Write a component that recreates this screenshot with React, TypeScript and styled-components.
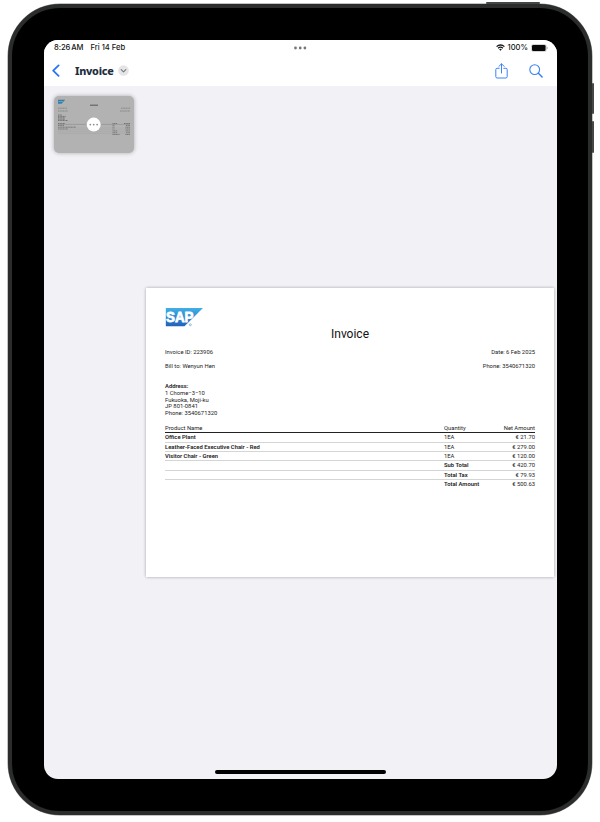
import React from "react";
import styled, { createGlobalStyle } from "styled-components";

const GlobalStyle = createGlobalStyle`
  * { box-sizing: border-box; }
  body { margin: 0; background: #fff; }
`;

const Stage = styled.main`
  width: 600px;
  height: 822px;
  padding: 4px 8px 7px;
  overflow: hidden;
`;

const Tablet = styled.div`
  position: relative;
  width: 584px;
  height: 811px;
  padding: 32px 31px 32px 32px;
  border: 4px solid #2b2c2c;
  border-radius: 52px;
  background: #000;
  box-shadow: inset 0 0 1px #111, 0 0 0 0.5px #8a8a8a;
`;

const HardwareButton = styled.i<{ $x: number; $y: number; $w: number; $h: number }>`
  position: absolute;
  left: ${(p) => p.$x}px;
  top: ${(p) => p.$y}px;
  width: ${(p) => p.$w}px;
  height: ${(p) => p.$h}px;
  border-radius: 1px;
  background: #454647;
`;

const Screen = styled.div`
  display: flex;
  flex-direction: column;
  width: 513px;
  height: 739px;
  border-radius: 14px;
  overflow: hidden;
  background: #f2f1f6;
`;

const StatusBar = styled.div`
  display: grid;
  grid-template-columns: 1fr auto 1fr;
  align-items: center;
  height: 15px;
  padding: 0 9px 0 10px;
  background: #fff;
  color: #161616;
  font: 500 7.6px/15px Inter, sans-serif;
`;

const StatusGroup = styled.div<{ $end?: boolean }>`
  display: flex;
  align-items: center;
  justify-content: ${(p) => (p.$end ? "flex-end" : "flex-start")};
  gap: ${(p) => (p.$end ? 3 : 7)}px;
  white-space: nowrap;
`;

const Clock = styled.span`
  letter-spacing: -0.1px;
  word-spacing: -0.8px;
`;

const Toolbar = styled.header`
  display: flex;
  align-items: center;
  height: 31px;
  padding: 0 14px 0 8px;
  background: #fff;
`;

const Title = styled.h1`
  margin: 0 5px 0 14px;
  color: #1d2d3e;
  font: 800 10.8px/16px "Noto Sans", sans-serif;
  letter-spacing: -0.27px;
`;

const Actions = styled.div`
  display: flex;
  align-items: center;
  gap: 21px;
  margin-left: auto;
`;

const Viewer = styled.section`
  display: flex;
  flex: 1;
  flex-direction: column;
  padding: 10px 3px 5px 10px;
`;

const Thumbnail = styled.div`
  width: 80px;
  height: 57px;
  border-radius: 5px;
  overflow: hidden;
  background: #b2b2b2;
  box-shadow: 0 0 4px rgba(0, 0, 0, 0.3);
`;

const Paper = styled.article`
  align-self: flex-end;
  width: 408px;
  height: 289px;
  margin-top: 135px;
  padding: 19px 19px 0;
  background: #fff;
  color: #1c1c1c;
  font: 400 5.85px/6.75px Roboto, sans-serif;
  box-shadow: 0 0 3px rgba(0, 0, 0, 0.32);
`;

const DocTitle = styled.h2`
  margin: 0 0 8px;
  height: 14px;
  text-align: center;
  color: #111;
  font: 400 12px/14px Roboto, sans-serif;
`;

const Meta = styled.div`
  display: flex;
  justify-content: space-between;
  height: 13.6px;
`;

const Address = styled.address`
  height: 42px;
  margin-top: 7px;
  font-style: normal;
`;

const Line = styled.div`
  height: 6.75px;
`;

const Row = styled.div<{ $head?: boolean; $last?: boolean }>`
  display: grid;
  grid-template-columns: 279px 45px 1fr;
  height: ${(p) => (p.$head ? 8 : 9.35)}px;
  line-height: ${(p) => (p.$head ? 6.8 : 8.6)}px;
  border-bottom: 1px solid ${(p) => (p.$head ? "#222" : p.$last ? "transparent" : "#d4d6d6")};
  white-space: nowrap;
`;

const Cell = styled.span<{ $bold?: boolean; $right?: boolean }>`
  font-weight: ${(p) => (p.$bold ? 600 : 400)};
  text-align: ${(p) => (p.$right ? "right" : "left")};
`;

const HomeIndicator = styled.div`
  width: 171px;
  height: 4px;
  margin: auto auto 0 161px;
  border-radius: 2px;
  background: #000;
`;

const Icon = styled.svg`
  display: block;
  flex: none;
`;

const rows = [
  { name: "Office Plant", label: "1EA", amount: "€ 21.70" },
  { name: "Leather-Faced Executive Chair - Red", label: "1EA", amount: "€ 279.00" },
  { name: "Visitor Chair - Green", label: "1EA", amount: "€ 120.00" },
  { name: "", label: "Sub Total", amount: "€ 420.70" },
  { name: "", label: "Total Tax", amount: "€ 79.93" },
  { name: "", label: "Total Amount", amount: "€ 500.63" },
];

const SapLogo = () => (
  <Icon width="38" height="20" viewBox="0 0 38 20">
    <defs>
      <linearGradient id="sap" x1="0" y1="0" x2="0" y2="1">
        <stop offset="0" stopColor="#3fb1e5" />
        <stop offset="1" stopColor="#2460bc" />
      </linearGradient>
    </defs>
    <path d="M.8 1H38L19.5 19.2H.8z" fill="url(#sap)" />
    <text x="1" y="15.4" fill="#fff" stroke="#fff" strokeWidth=".8" fontFamily="Liberation Sans, sans-serif" fontWeight="700" fontSize="15.2" textLength="27.5" lengthAdjust="spacingAndGlyphs">SAP</text>
    <circle cx="25.3" cy="17.8" r="1" fill="none" stroke="#6aa2d8" strokeWidth=".7" />
  </Icon>
);

/* Miniature of the page: each bar is [x, y, width]. */
const bars = [
  [4, 12.2, 9], [4, 15, 10], [67, 12.2, 9], [66, 15, 10],
  [4, 19, 4], [4, 20.4, 8], [4, 21.8, 7], [4, 23.2, 7], [4, 24.5, 10],
  [4, 27.5, 7], [58.5, 27.5, 4.5], [70, 27.5, 6],
  [4, 29.4, 6], [4, 31.2, 18], [4, 33, 10],
  [58.5, 29.4, 2], [58.5, 31.2, 2], [58.5, 33, 2],
  [58.5, 34.9, 5], [58.5, 36.7, 5], [58.5, 38.5, 7],
  [72, 29.4, 4], [71.5, 31.2, 4.5], [71.5, 33, 4.5], [71.5, 34.9, 4.5], [72, 36.7, 4], [71.5, 38.5, 4.5],
];

const PagePreview = () => (
  <Icon width="80" height="57" viewBox="0 0 80 57">
    <path d="M4 3.8h7.2L7.6 7.8H4z" fill="#347eae" />
    <path d="M4.4 5.6h4.8" stroke="#a0b6c3" strokeWidth=".6" />
    <path d="M36 9.2h8" stroke="#747474" strokeWidth="1.6" />
    {bars.map(([x, y, w]) => (
      <path key={`${x}-${y}`} d={`M${x} ${y}h${w}`} stroke="#606060" strokeWidth="1" strokeDasharray="1.2 .4" opacity={y < 18 ? 0.5 : 0.75} />
    ))}
    <path d="M4 28.4h72" stroke="#777" strokeWidth=".4" />
    <path d="M4 32.1h72M4 33.9h72M4 35.8h72M4 37.6h72" stroke="#9b9b9b" strokeWidth=".3" />
    <circle cx="39.7" cy="28.6" r="7" fill="#fff" />
    <g fill="#8c8c8c">
      <circle cx="36.3" cy="28.6" r=".9" />
      <circle cx="39.7" cy="28.6" r=".9" />
      <circle cx="43.1" cy="28.6" r=".9" />
    </g>
  </Icon>
);

const Invoice = () => (
  <Paper>
    <SapLogo />
    <DocTitle>Invoice</DocTitle>
    <Meta>
      <span>Invoice ID: 223906</span>
      <span>Date: 6 Feb 2025</span>
    </Meta>
    <Meta>
      <span>Bill to: Wenyun Hen</span>
      <span>Phone: 3540671320</span>
    </Meta>
    <Address>
      <Line><Cell $bold>Address:</Cell></Line>
      <Line>1 Chome−3−10</Line>
      <Line>Fukuoka, Moji-ku</Line>
      <Line>JP 801-0841</Line>
      <Line>Phone: 3540671320</Line>
    </Address>
    <Row $head>
      <Cell>Product Name</Cell>
      <Cell>Quantity</Cell>
      <Cell $right>Net Amount</Cell>
    </Row>
    {rows.map((row, i) => (
      <Row key={row.amount} $last={i === rows.length - 1}>
        <Cell $bold>{row.name}</Cell>
        <Cell $bold={!row.name}>{row.label}</Cell>
        <Cell $right>{row.amount}</Cell>
      </Row>
    ))}
  </Paper>
);

export default function App() {
  return (
    <Stage>
      <GlobalStyle />
      <Tablet>
        <HardwareButton $x={474} $y={-6} $w={54} $h={2} />
        <HardwareButton $x={580} $y={75} $w={2} $h={31} />
        <HardwareButton $x={580} $y={113} $w={2} $h={32} />
        <Screen>
          <StatusBar>
            <StatusGroup>
              <Clock>8:26 AM</Clock>
              <span>Fri 14 Feb</span>
            </StatusGroup>
            <Icon width="14" height="4" viewBox="0 0 14 4" fill="#777">
              <circle cx="1.5" cy="2" r="1.4" />
              <circle cx="6.2" cy="2" r="1.4" />
              <circle cx="10.9" cy="2" r="1.4" />
            </Icon>
            <StatusGroup $end>
              <Icon width="9" height="7" viewBox="0 0 9 7" fill="none" stroke="#161616" strokeWidth="1.3">
                <path d="M.6 2.6a5.5 5.5 0 0 1 7.8 0M2.1 4.3a3.4 3.4 0 0 1 4.8 0" />
                <path d="M3.2 5.4a1.9 1.9 0 0 1 2.6 0L4.5 6.8z" fill="#161616" stroke="none" />
              </Icon>
              <span>100%</span>
              <Icon width="17" height="8" viewBox="0 0 17 8">
                <rect x=".4" y=".5" width="15" height="7" rx="1.9" fill="none" stroke="#aaa" strokeWidth=".5" />
                <rect x="1" y="1.1" width="13.6" height="5.8" rx="1.2" fill="#080808" />
                <path d="M16.2 3v2" stroke="#999" strokeWidth=".8" />
              </Icon>
            </StatusGroup>
          </StatusBar>
          <Toolbar>
            <Icon width="9" height="13" viewBox="0 0 9 13" fill="none" stroke="#2876f3" strokeWidth="1.8" strokeLinecap="round" strokeLinejoin="round">
              <path d="M6.6 1.4 1.2 6.6l5.4 5.2" />
            </Icon>
            <Title>Invoice</Title>
            <Icon width="11" height="11" viewBox="0 0 11 11">
              <circle cx="5.5" cy="5.5" r="5.3" fill="#e5e5e7" />
              <path d="m3.2 4.6 2.3 2.2 2.3-2.2" fill="none" stroke="#777" strokeWidth="1.1" strokeLinecap="round" strokeLinejoin="round" />
            </Icon>
            <Actions>
              <Icon width="13" height="16" viewBox="0 0 13 16" fill="none" stroke="#3b82f5" strokeWidth="1" strokeLinecap="round" strokeLinejoin="round">
                <path d="M4.2 5.3H2.1Q.8 5.3.8 6.6v7q0 1.4 1.3 1.4h8.8q1.3 0 1.3-1.4v-7q0-1.3-1.3-1.3H8.8M6.5 10V.9M3.9 3.4 6.5.8l2.6 2.6" />
              </Icon>
              <Icon width="14" height="14" viewBox="0 0 14 14" fill="none" stroke="#3b82f5" strokeLinecap="round">
                <circle cx="5.7" cy="5.6" r="4.9" strokeWidth="1.1" />
                <path d="m9.4 9.3 3.7 3.7" strokeWidth="1.5" />
              </Icon>
            </Actions>
          </Toolbar>
          <Viewer>
            <Thumbnail><PagePreview /></Thumbnail>
            <Invoice />
            <HomeIndicator />
          </Viewer>
        </Screen>
      </Tablet>
    </Stage>
  );
}
